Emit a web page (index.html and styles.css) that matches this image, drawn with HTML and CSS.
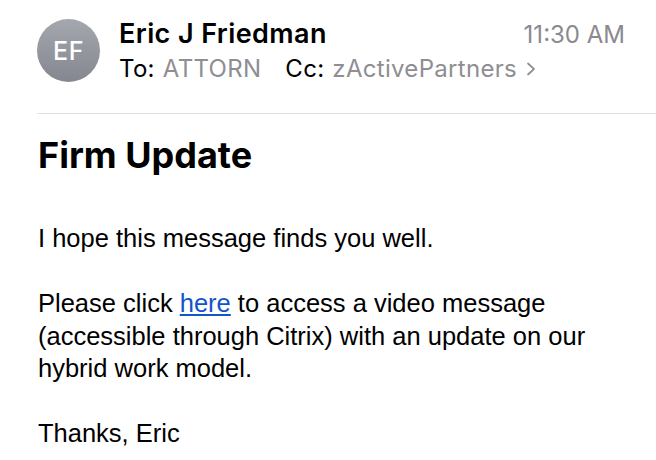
FILE: index.html
```html
<!DOCTYPE html>
<html lang="en">
<head>
<meta charset="utf-8">
<title>Firm Update</title>
<link rel="stylesheet" href="styles.css">
</head>
<body>
<div class="mail">
  <header class="head">
    <div class="avatar">EF</div>
    <div class="meta">
      <div class="row">
        <span class="name">Eric J Friedman</span>
        <span class="time">11:30 AM</span>
      </div>
      <div class="recips">
        <span class="lbl">To:</span><span class="val">ATTORN</span><span class="lbl cc">Cc:</span><span class="val">zActivePartners</span><svg class="chev" width="10" height="16" viewBox="0 0 10 16"><path d="M2 2.5 L8 8 L2 13.5" fill="none" stroke="#8e8e93" stroke-width="1.7" stroke-linecap="round" stroke-linejoin="round"/></svg>
      </div>
    </div>
  </header>
  <main class="content">
    <h1 class="subject">Firm Update</h1>
    <div class="body">
      <p>I hope this message finds you well.</p>
      <p>Please click <a href="#">here</a> to access a video message (accessible through Citrix) with an update on our hybrid work model.</p>
      <p>Thanks, Eric</p>
    </div>
  </main>
</div>
</body>
</html>
```
FILE: styles.css
```css
html, body {
  margin: 0;
  padding: 0;
  background: #ffffff;
}

.mail {
  width: 656px;
  height: 460px;
  overflow: hidden;
}

.head {
  display: flex;
  align-items: flex-start;
  margin-left: 37px;
  padding-top: 19px;
  height: 114px;
  box-sizing: border-box;
  border-bottom: 1px solid #e1e1e3;
}

.avatar {
  width: 63px;
  height: 63px;
  border-radius: 50%;
  background: linear-gradient(#a5a7af, #858790);
  color: #ffffff;
  font-family: Inter, "Noto Sans", sans-serif;
  font-size: 25px;
  font-weight: 500;
  letter-spacing: 0.5px;
  display: flex;
  align-items: center;
  justify-content: center;
  flex-shrink: 0;
}

.meta {
  flex: 1;
  margin-left: 19px;
  padding-right: 31px;
  font-family: Inter, "Noto Sans", sans-serif;
}

.row {
  display: flex;
  justify-content: space-between;
  align-items: baseline;
  height: 32px;
  line-height: 32px;
  margin-top: -1px;
}

.name {
  font-size: 27px;
  font-weight: 600;
  letter-spacing: 0.4px;
  color: #000000;
}

.time {
  font-size: 24px;
  color: #8a8a8e;
}

.recips {
  font-size: 24px;
  line-height: 38px;
  letter-spacing: 0.3px;
  color: #000000;
  display: flex;
  align-items: baseline;
}

.val {
  color: #8e8e93;
  margin-left: 8px;
}

.cc {
  margin-left: 24px;
}

.chev {
  align-self: center;
  margin-left: 9px;
}

.content {
  padding-left: 38px;
  padding-right: 20px;
}

.subject {
  margin: 19px 0 0;
  font-family: Inter, "Noto Sans", sans-serif;
  font-size: 36px;
  font-weight: 700;
  line-height: 44px;
  color: #000000;
}

.body {
  margin-top: 45px;
  font-family: "Liberation Sans", Arial, sans-serif;
  font-size: 25.5px;
  line-height: 32.5px;
  color: #000000;
}

.body p {
  margin: 0 0 32.5px;
}

.body a {
  color: #1155cc;
  text-decoration: underline;
}
```
